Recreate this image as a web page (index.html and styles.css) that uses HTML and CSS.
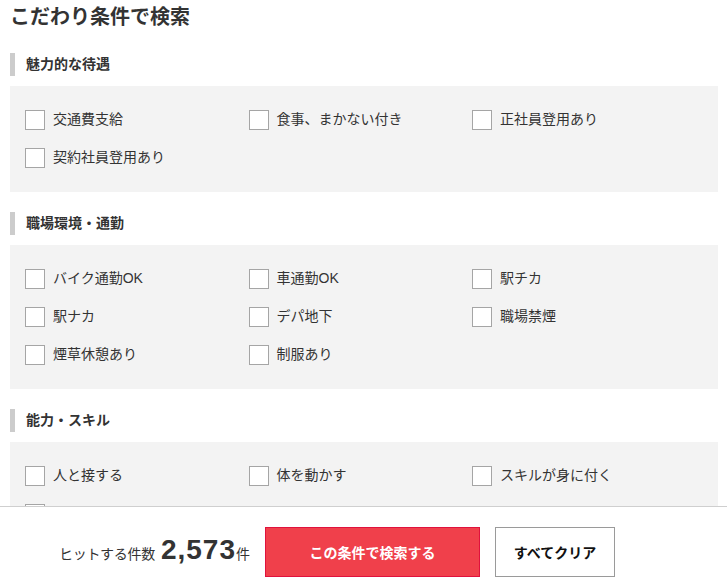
FILE: index.html
```html
<!DOCTYPE html>
<html lang="ja">
<head>
<meta charset="utf-8">
<title>こだわり条件で検索</title>
<link rel="stylesheet" href="styles.css">
</head>
<body>
<div class="page">
  <main class="main">
    <h1 class="title">こだわり条件で検索</h1>

    <section class="group">
      <h2 class="group-head">魅力的な待遇</h2>
      <div class="options">
        <label class="opt"><span class="box"></span><span class="label">交通費支給</span></label>
        <label class="opt"><span class="box"></span><span class="label">食事、まかない付き</span></label>
        <label class="opt"><span class="box"></span><span class="label">正社員登用あり</span></label>
        <label class="opt"><span class="box"></span><span class="label">契約社員登用あり</span></label>
      </div>
    </section>

    <section class="group">
      <h2 class="group-head">職場環境・通勤</h2>
      <div class="options">
        <label class="opt"><span class="box"></span><span class="label">バイク通勤OK</span></label>
        <label class="opt"><span class="box"></span><span class="label">車通勤OK</span></label>
        <label class="opt"><span class="box"></span><span class="label">駅チカ</span></label>
        <label class="opt"><span class="box"></span><span class="label">駅ナカ</span></label>
        <label class="opt"><span class="box"></span><span class="label">デパ地下</span></label>
        <label class="opt"><span class="box"></span><span class="label">職場禁煙</span></label>
        <label class="opt"><span class="box"></span><span class="label">煙草休憩あり</span></label>
        <label class="opt"><span class="box"></span><span class="label">制服あり</span></label>
      </div>
    </section>

    <section class="group">
      <h2 class="group-head">能力・スキル</h2>
      <div class="options">
        <label class="opt"><span class="box"></span><span class="label">人と接する</span></label>
        <label class="opt"><span class="box"></span><span class="label">体を動かす</span></label>
        <label class="opt"><span class="box"></span><span class="label">スキルが身に付く</span></label>
        <label class="opt"><span class="box"></span><span class="label">資格が活かせる</span></label>
      </div>
    </section>
  </main>

  <footer class="bar">
    <div class="count">
      <span class="count-label">ヒットする件数</span>
      <span class="count-num">2,573</span>
      <span class="count-unit">件</span>
    </div>
    <button class="btn btn-search" type="button">この条件で検索する</button>
    <button class="btn btn-clear" type="button">すべてクリア</button>
  </footer>
</div>
</body>
</html>
```

FILE: styles.css
```css
html, body {
  margin: 0;
  padding: 0;
  height: 100%;
  overflow: hidden;
  background: #fff;
}

body {
  font-family: "Liberation Sans", "Noto Sans CJK JP", sans-serif;
  color: #333;
}

.page {
  height: 100vh;
  display: flex;
  flex-direction: column;
}

.main {
  flex: 1;
  overflow: hidden;
  padding: 0 9px 0 10px;
}

.title {
  margin: 2px 0 0;
  height: 30px;
  font-size: 20px;
  line-height: 30px;
  font-weight: 700;
  color: #333;
}

.group-head {
  margin: 20px 0 10px;
  height: 23px;
  border-left: 5px solid #cccccc;
  padding-left: 11px;
  font-size: 14px;
  line-height: 22px;
  font-weight: 700;
  color: #333;
}

.group:first-of-type .group-head {
  margin-top: 21px;
}

.options {
  background: #f3f3f3;
  padding: 24px 15px;
  display: grid;
  grid-template-columns: repeat(3, 223.5px);
  row-gap: 18px;
}

.opt {
  display: flex;
  align-items: center;
  height: 20px;
  gap: 8px;
  cursor: pointer;
}

.box {
  box-sizing: border-box;
  width: 20px;
  height: 20px;
  flex: none;
  background: #fff;
  border: 1px solid #a5a5a5;
}

.label {
  font-size: 14px;
  line-height: 20px;
  margin-top: -3px;
  color: #333;
  white-space: nowrap;
}

.bar {
  flex: none;
  height: 78px;
  box-sizing: border-box;
  border-top: 1px solid #cfcfcf;
  background: #fff;
  display: flex;
  align-items: flex-start;
  padding: 20px 0 0 59px;
}

.count {
  height: 50px;
  display: flex;
  align-items: baseline;
  padding-top: 7px;
  box-sizing: border-box;
  margin-right: 15px;
}

.count-label {
  font-size: 14px;
  color: #333;
  letter-spacing: -0.3px;
}

.count-num {
  font-size: 28px;
  font-weight: 700;
  color: #333;
  margin-left: 6px;
  letter-spacing: 1px;
}

.count-unit {
  font-size: 14px;
  color: #333;
  margin-left: 0;
}

.btn {
  box-sizing: border-box;
  height: 50px;
  font-family: "Liberation Sans", "Noto Sans CJK JP", sans-serif;
  font-size: 14px;
  font-weight: 700;
  padding: 0;
  cursor: pointer;
}

.btn-search {
  width: 215px;
  background: #f0404b;
  border: 1px solid #e0123d;
  color: #fff;
  margin-right: 15px;
}

.btn-clear {
  width: 120px;
  background: #fff;
  border: 1px solid #9a9a9a;
  color: #111;
}
```
